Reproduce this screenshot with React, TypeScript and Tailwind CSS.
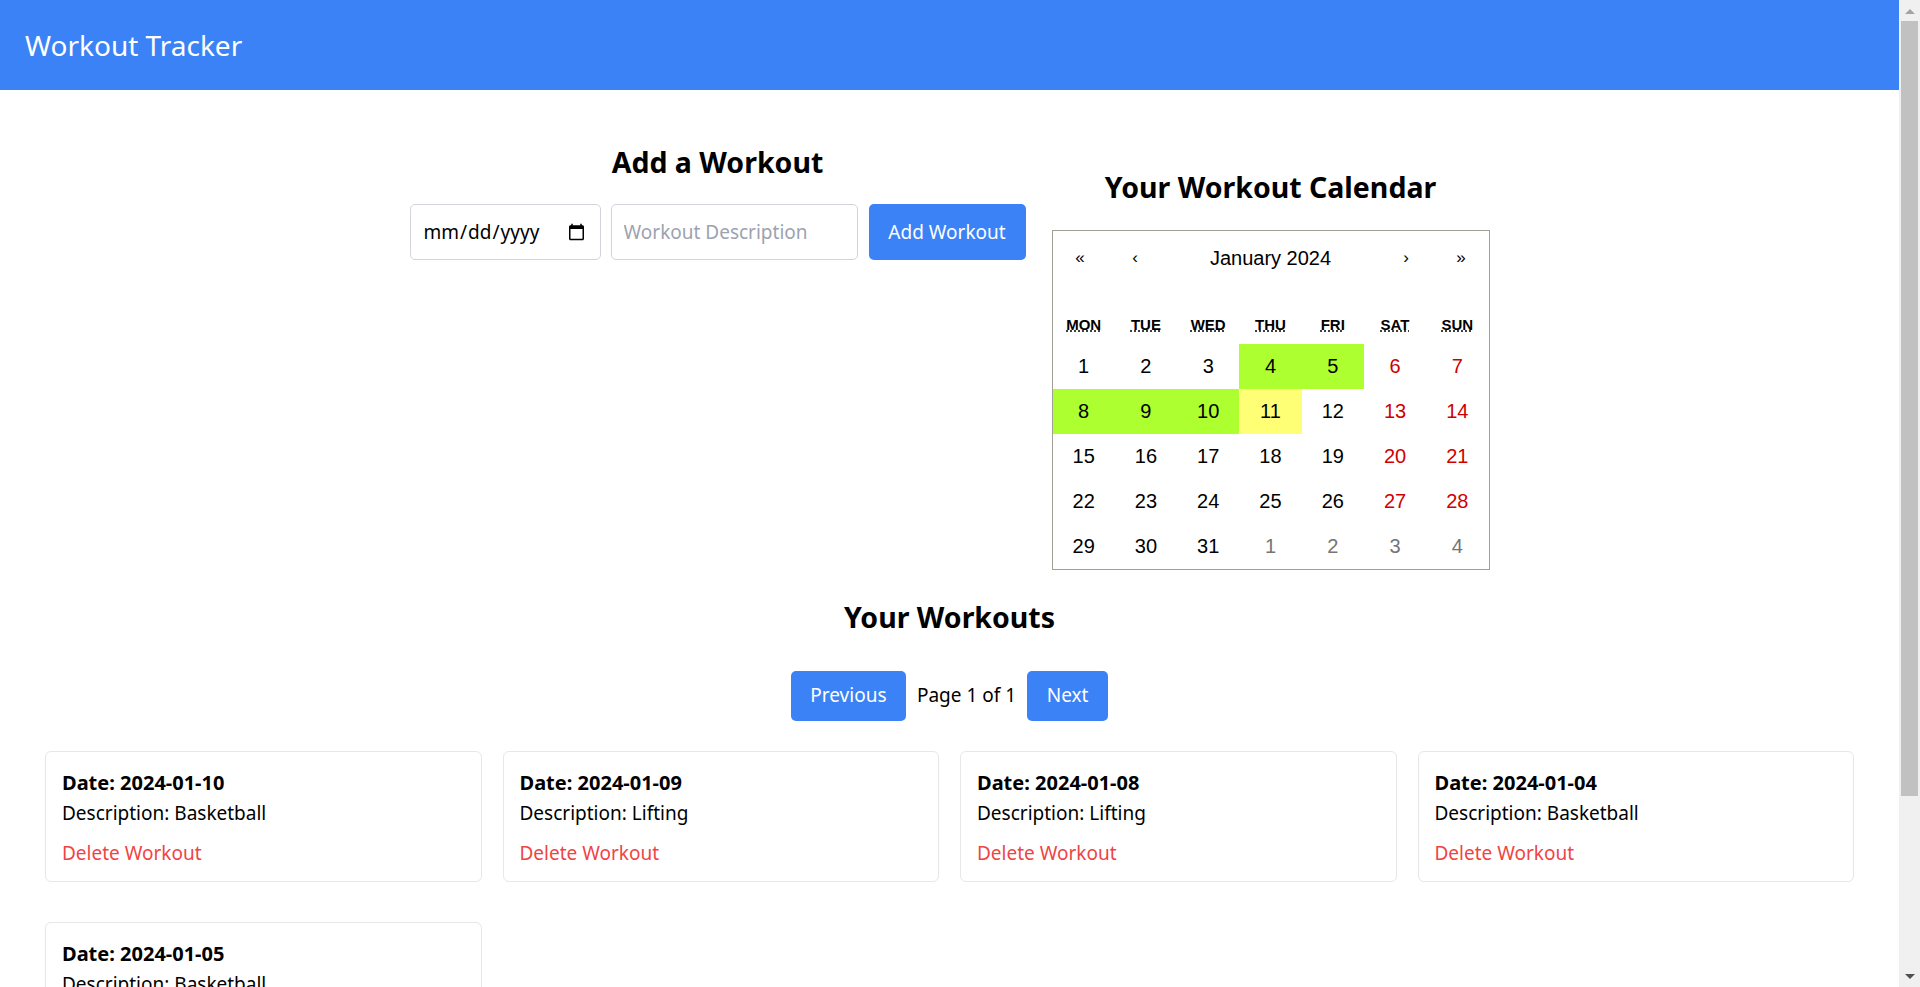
import { useState } from 'react';

type Workout = { id: number; date: string; description: string };

const initialWorkouts: Workout[] = [
  { id: 1, date: '2024-01-10', description: 'Basketball' },
  { id: 2, date: '2024-01-09', description: 'Lifting' },
  { id: 3, date: '2024-01-08', description: 'Lifting' },
  { id: 4, date: '2024-01-04', description: 'Basketball' },
  { id: 5, date: '2024-01-05', description: 'Basketball' },
];

const weekdays = [
  { short: 'Mon', full: 'Monday' },
  { short: 'Tue', full: 'Tuesday' },
  { short: 'Wed', full: 'Wednesday' },
  { short: 'Thu', full: 'Thursday' },
  { short: 'Fri', full: 'Friday' },
  { short: 'Sat', full: 'Saturday' },
  { short: 'Sun', full: 'Sunday' },
];

// January 2024 starts on a Monday, so 31 days + 4 days of February fill five weeks
const days = [
  ...Array.from({ length: 31 }, (_, i) => ({ day: i + 1, current: true })),
  ...Array.from({ length: 4 }, (_, i) => ({ day: i + 1, current: false })),
];

function WorkoutCalendar({ workouts }: { workouts: Workout[] }) {
  const done = new Set(workouts.map((w) => Number(w.date.slice(8, 10))));

  return (
    <div className="w-[438px] border border-[#a0a096] bg-white font-['Liberation_Sans',Arial,sans-serif] leading-[22.5px]">
      <div className="flex h-[55px] mb-[20px]">
        <button className="min-w-[55px] text-[17px] text-black">«</button>
        <button className="min-w-[55px] text-[17px] text-black">‹</button>
        <button className="flex-1 text-[20px] text-black">January 2024</button>
        <button className="min-w-[55px] text-[17px] text-black">›</button>
        <button className="min-w-[55px] text-[17px] text-black">»</button>
      </div>
      <div className="grid grid-cols-7 text-center uppercase font-bold text-[15px]">
        {weekdays.map((d) => (
          <div key={d.short} className="py-[7.5px]">
            <abbr title={d.full} className="underline decoration-dotted">
              {d.short}
            </abbr>
          </div>
        ))}
      </div>
      <div className="grid grid-cols-7">
        {days.map((d, i) => {
          const col = i % 7;
          const weekend = col >= 5;
          const isToday = d.current && d.day === 11;
          const hasWorkout = d.current && done.has(d.day);
          let bg = '';
          if (isToday) bg = 'bg-[#ffff76]';
          else if (hasWorkout) bg = 'bg-[#adff2f]';
          let color = 'text-black';
          if (!d.current) color = 'text-[#757575]';
          else if (weekend) color = 'text-[#d10000]';
          return (
            <button
              key={i}
              className={`h-[45px] text-[20px] leading-[20px] text-center ${bg} ${color}`}
            >
              {d.day}
            </button>
          );
        })}
      </div>
    </div>
  );
}

// Drawn stand-in for the browser's vertical scrollbar
function Scrollbar() {
  return (
    <div className="w-[21px] h-full bg-[#f0f0f0] flex flex-col items-center shrink-0">
      <div className="h-[21px] flex items-center justify-center">
        <svg width="10" height="6" viewBox="0 0 10 6">
          <path d="M0 6 L5 1 L10 6 Z" fill="#a3a3a3" />
        </svg>
      </div>
      <div className="w-[17px] h-[775px] bg-[#c1c1c1]" />
      <div className="flex-1" />
      <div className="h-[21px] flex items-center justify-center">
        <svg width="10" height="6" viewBox="0 0 10 6">
          <path d="M0 0 L5 5 L10 0 Z" fill="#505050" />
        </svg>
      </div>
    </div>
  );
}

export default function App() {
  const [workouts, setWorkouts] = useState<Workout[]>(initialWorkouts);
  const [date, setDate] = useState('');
  const [description, setDescription] = useState('');

  const addWorkout = () => {
    if (!date || !description) return;
    setWorkouts([{ id: Date.now(), date, description }, ...workouts]);
    setDate('');
    setDescription('');
  };

  return (
    <div className="h-screen flex bg-white text-black font-['Noto_Sans','Segoe_UI',sans-serif] text-[19px]">
      <div className="flex-1 overflow-y-auto">
        <header className="h-[90px] bg-[#3b82f6] flex items-center px-[25px]">
          <h1 className="text-[28px] text-white leading-[40px]">Workout Tracker</h1>
        </header>

        <main>
          <div className="flex justify-center items-start gap-[26px]">
            <section className="pt-[52px] flex flex-col items-center">
              <h2 className="text-[28.5px] font-bold leading-[40px]">Add a Workout</h2>
              <div className="flex gap-[10px] mt-[22px]">
                <input
                  type="date"
                  value={date}
                  onChange={(e) => setDate(e.target.value)}
                  className="w-[191px] h-[56px] px-[12px] border border-[#d1d5db] rounded-[5px] text-[19px] text-black"
                />
                <input
                  type="text"
                  placeholder="Workout Description"
                  value={description}
                  onChange={(e) => setDescription(e.target.value)}
                  className="w-[247px] h-[56px] px-[12px] border border-[#d1d5db] rounded-[5px] text-[19px] placeholder:text-[#9ca3af]"
                />
                <button
                  onClick={addWorkout}
                  className="w-[157px] h-[56px] ml-[1px] bg-[#3b82f6] text-white rounded-[5px] text-[19px]"
                >
                  Add Workout
                </button>
              </div>
            </section>

            <section className="pt-[77px] flex flex-col items-center">
              <h2 className="text-[28.5px] font-bold leading-[40px]">Your Workout Calendar</h2>
              <div className="mt-[23px]">
                <WorkoutCalendar workouts={workouts} />
              </div>
            </section>
          </div>

          <h2 className="mt-[27px] text-center text-[28.5px] font-bold leading-[40px]">Your Workouts</h2>

          <div className="mt-[34px] flex justify-center items-center">
            <button className="w-[115px] h-[50px] bg-[#3b82f6] text-white rounded-[5px]">Previous</button>
            <span className="mx-[11px]">Page 1 of 1</span>
            <button className="w-[81px] h-[50px] bg-[#3b82f6] text-white rounded-[5px]">Next</button>
          </div>

          <div className="mt-[30px] px-[45px] pb-[40px] grid grid-cols-4 gap-x-[21px] gap-y-[40px]">
            {workouts.map((w) => (
              <div key={w.id} className="border border-[#e5e7eb] rounded-[6px] px-4 pt-4 pb-[13px] leading-[30px]">
                <p className="font-bold text-[20px]">Date: {w.date}</p>
                <p>Description: {w.description}</p>
                <button
                  onClick={() => setWorkouts(workouts.filter((x) => x.id !== w.id))}
                  className="mt-[10px] text-[#ef4444]"
                >
                  Delete Workout
                </button>
              </div>
            ))}
          </div>
        </main>
      </div>
      <Scrollbar />
    </div>
  );
}
